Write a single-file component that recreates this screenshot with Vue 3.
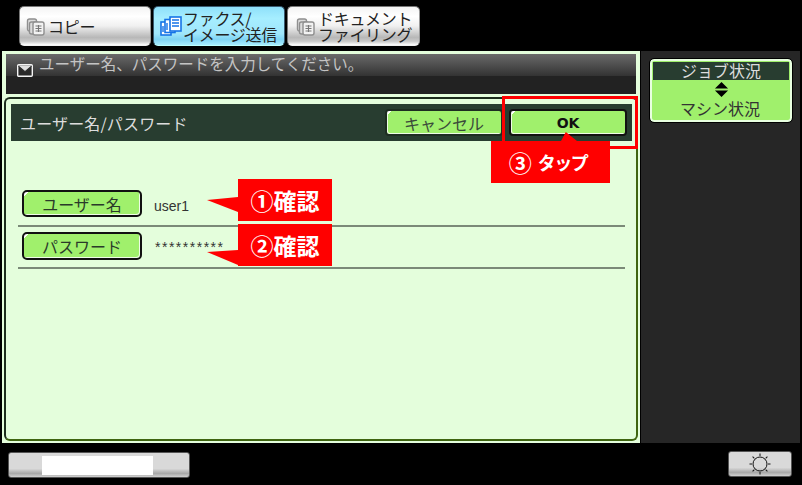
<script setup>
const tabs = [
  { id: 'copy', lines: ['コピー'], active: false },
  { id: 'fax', lines: ['ファクス/', 'イメージ送信'], active: true },
  { id: 'doc', lines: ['ドキュメント', 'ファイリング'], active: false },
]
const rows = [
  { label: 'ユーザー名', value: 'user1', cls: '' },
  { label: 'パスワード', value: '**********', cls: 'pw' },
]
const rays = [0, 45, 90, 135, 180, 225, 270, 315]
</script>

<template>
  <div class="screen">
    <div class="tabs">
      <div v-for="t in tabs" :key="t.id" class="tab" :class="[t.id, { active: t.active }]">
        <svg v-if="t.active" class="tab-icon" viewBox="0 0 22 20" width="22" height="20">
          <g fill="#fff" stroke="#1673e6" stroke-width="1.6">
            <rect x="1" y="6" width="10" height="13" />
            <rect x="5" y="3.5" width="10" height="13" />
            <rect x="10" y="1" width="11" height="14" />
          </g>
          <path d="M12 4h7M12 7h7M12 10h7" stroke="#1673e6" stroke-width="1.4" />
          <path d="M7 7v7M3 10v6" stroke="#1673e6" stroke-width="1.4" />
        </svg>
        <svg v-else class="tab-icon" viewBox="0 0 20 20" width="20" height="20">
          <g fill="#dcdcdc" stroke="#8f8f8f" stroke-width="1.4">
            <rect x="1.5" y="3" width="9" height="12" rx="2" />
            <rect x="3.5" y="6" width="9" height="12" rx="2" />
            <rect x="7" y="6" width="11" height="13" rx="2" fill="#f2f2f2" />
          </g>
          <path d="M9.5 10h6M9.5 12.5h6M9.5 15h6M12.5 9v7" stroke="#777" stroke-width="1.1" />
        </svg>
        <div class="tab-text">
          <span v-for="l in t.lines" :key="l">{{ l }}</span>
        </div>
      </div>
    </div>

    <div class="main">
      <div class="left">
        <div class="message">
          <svg class="mail" viewBox="0 0 16 13" width="16" height="13">
            <rect x="0.7" y="0.7" width="14.6" height="11.6" rx="1" fill="#2a2a2a" stroke="#f4f4f4" stroke-width="1.4" />
            <path d="M1.5 1.5h13L8 7z" fill="#e0e0e0" />
            <path d="M1.5 2.5L8 8l6.5-5.5" fill="none" stroke="#333" stroke-width="1" />
          </svg>
          <span class="message-text">ユーザー名、パスワードを入力してください。</span>
        </div>
        <div class="panel">
          <div class="panel-head">
            <span class="panel-title">ユーザー名/パスワード</span>
            <div class="head-btns">
              <div class="gbtn head cancel">キャンセル</div>
              <div class="gbtn head ok">OK</div>
            </div>
          </div>
          <div class="rows">
            <div v-for="r in rows" :key="r.label" class="row">
              <div class="gbtn field">{{ r.label }}</div>
              <span class="value" :class="r.cls">{{ r.value }}</span>
            </div>
          </div>
        </div>
      </div>

      <div class="side">
        <div class="job">
          <div class="job-top">ジョブ状況</div>
          <svg class="job-arrows" viewBox="0 0 16 16" width="15" height="15">
            <path d="M8 0l7 7H1zM1 9h14l-7 7z" fill="#000" />
          </svg>
          <div class="job-bottom">マシン状況</div>
        </div>
      </div>
    </div>

    <div class="bottom">
      <div class="sbtn wide"><div class="white"></div></div>
      <div class="sbtn sun">
        <svg viewBox="0 0 24 24" width="24" height="24">
          <circle cx="12" cy="12" r="7" fill="none" stroke="#111" stroke-width="1" />
          <path
            v-for="a in rays"
            :key="a"
            d="M12 1.5v2.5"
            stroke="#111"
            stroke-width="1"
            :transform="`rotate(${a} 12 12)`"
          />
        </svg>
      </div>
    </div>

    <div class="frame"></div>
    <div class="callout tap"><span class="tap-arrow"></span><span class="circ">③</span><span class="tap-word">タップ</span></div>
    <div class="callout c1"><span class="left-arrow"></span>①確認</div>
    <div class="callout c2"><span class="left-arrow low"></span>②確認</div>
  </div>
</template>

<style>
html, body { margin: 0; background: #000; }
</style>

<style scoped>
.screen {
  position: relative;
  width: 802px;
  height: 485px;
  background: #000;
  overflow: hidden;
  font-family: "Noto Sans CJK JP", "Liberation Sans", sans-serif;
}
.tabs {
  display: flex;
  gap: 2px;
  height: 51px;
  box-sizing: border-box;
  padding: 6px 0 0 19px;
}
.tab {
  width: 132px;
  height: 40px;
  box-sizing: border-box;
  display: flex;
  align-items: center;
  padding-left: 6px;
  gap: 1px;
  border-radius: 5px;
  border: 1px solid #777;
  border-bottom-color: #f0f0f0;
  border-right-color: #999;
  background: linear-gradient(#f4f4f4 0, #fff 25%, #f0f0f0 50%, #b8b8b8 80%, #c8c8c8 90%, #fff 100%);
  color: #222;
  font-size: 16px;
  line-height: 16px;
}
.tab.active {
  background: linear-gradient(#8fe0fa 0, #a6eeff 30%, #9fe6fb 70%, #7fd4f4 85%, #a8ecff 100%);
  border-color: #3a5a70;
  border-bottom-color: #bff;
}
.tab.doc { width: 133px; padding-left: 8px; gap: 2px; }
.tab.copy { gap: 2px; }
.tab-icon { flex: none; }
.tab-text { display: flex; flex-direction: column; letter-spacing: -0.3px; white-space: nowrap; }
.main {
  display: flex;
  height: 392px;
}
.left {
  width: 638px;
  margin-left: 2px;
  display: flex;
  flex-direction: column;
  background: #e4fedc;
  box-sizing: border-box;
}
.message {
  height: 40px;
  margin: 3px 4px 0 4px;
  box-sizing: border-box;
  display: flex;
  align-items: flex-start;
  background: linear-gradient(#6a6a6a 0, #333 22px, #222 22px, #222 100%);
  padding-left: 11px;
  color: #c4c4c4;
  font-size: 15.5px;
  line-height: 18px;
  gap: 6px;
  flex: none;
}
.mail { margin-top: 10px; flex: none; }
.panel {
  flex: 1;
  margin: 3px 2px 2px 2px;
  border: 2px solid #1c2c1c;
  border-right-color: #3f6510;
  border-bottom-color: #3f6510;
  border-radius: 6px;
  background: #e4fedc;
  box-sizing: border-box;
  padding: 5px 0 0 5px;
  display: flex;
  flex-direction: column;
}
.panel-head {
  height: 37px;
  width: 621px;
  background: #283d30;
  display: flex;
  align-items: center;
  justify-content: space-between;
  box-sizing: border-box;
  padding: 0 5px 0 9px;
  flex: none;
}
.panel-title { color: #ddd; font-size: 16px; white-space: nowrap; letter-spacing: 0.15px; }
.head-btns { display: flex; gap: 6px; }
.gbtn {
  box-sizing: border-box;
  display: flex;
  align-items: center;
  justify-content: center;
  background: linear-gradient(135deg, #fff 3px, #a0f06c 3px);
  border-radius: 4px;
  color: #2a3a2a;
  white-space: nowrap;
}
.gbtn.head {
  width: 118px;
  height: 27px;
  border: 2px solid #111;
  box-shadow: inset 1px -1px 0 #eefce6;
  font-size: 16px;
}
.gbtn.cancel { border-color: #1e2d22; color: #3a4a3a; }
.gbtn.ok { font-family: "DejaVu Sans", sans-serif; font-weight: 700; font-size: 14px; color: #111; }
.rows {
  padding: 44px 7px 0 7px;
  display: flex;
  flex-direction: column;
  width: 621px;
  box-sizing: border-box;
}
.row {
  height: 42px;
  box-sizing: border-box;
  border-bottom: 2px solid #7b8a78;
  display: flex;
  align-items: flex-start;
  padding: 5px 0 0 4px;
}
.gbtn.field {
  width: 120px;
  height: 28px;
  border: 2px solid #111;
  box-shadow: inset -1px -1px 0 #eefce6;
  font-size: 16px;
  border-radius: 5px;
  flex: none;
}
.row:first-child .gbtn.field { height: 27px; }
.value {
  margin: 7px 0 0 12px;
  font: 14px/18px "Liberation Sans", sans-serif;
  color: #333;
}
.value.pw { letter-spacing: 1.5px; margin: 6px 0 0 13px; }
.side {
  width: 159px;
  margin-left: 1px;
  background: #262626;
  box-sizing: border-box;
  padding: 8px 8px 0 9px;
}
.job {
  height: 63px;
  border: 2px solid #e8ffe0;
  outline: 1px solid #000;
  border-radius: 4px;
  box-sizing: border-box;
  background: #a0f06c;
  display: flex;
  flex-direction: column;
  align-items: center;
  color: #333;
  font-size: 16px;
  line-height: 17px;
  padding: 1px;
}
.job-top {
  align-self: stretch;
  height: 18px;
  background: #283d30;
  color: #ddd;
  text-align: center;
  flex: none;
}
.job-arrows { margin: 2px 0 0; flex: none; }
.job-bottom { margin-top: 3px; margin-left: -2px; }
.bottom {
  display: flex;
  justify-content: space-between;
  align-items: flex-start;
  padding: 8px 10px 0 8px;
}
.sbtn {
  height: 26px;
  box-sizing: border-box;
  border: 1px solid #555;
  border-radius: 3px;
  background: linear-gradient(#d9d9d9 0, #d9d9d9 65%, #a8a8a8 85%, #d0d0d0 100%);
  display: flex;
  align-items: center;
  justify-content: center;
}
.wide { width: 182px; margin-top: 1px; justify-content: flex-start; padding-left: 33px; }
.white { width: 111px; height: 19px; background: #fff; }
.sun { width: 64px; }
.frame {
  position: absolute;
  left: 502px;
  top: 96px;
  width: 136px;
  height: 53px;
  box-sizing: border-box;
  border: 3px solid #f00;
}
.callout {
  position: absolute;
  background: #f00;
  color: #fff;
  font-weight: 700;
  display: flex;
  align-items: center;
  justify-content: center;
  white-space: nowrap;
}
.tap { left: 491px; top: 141px; width: 119px; height: 42px; gap: 6px; padding-right: 5px; box-sizing: border-box; }
.circ { font-size: 23px; }
.tap-word { font-size: 18px; letter-spacing: -1.5px; }
.c1 { left: 238px; top: 179px; width: 94px; height: 42px; font-size: 23px; }
.c2 { left: 238px; top: 224px; width: 94px; height: 42px; font-size: 23px; }
.tap-arrow {
  position: absolute;
  left: 70px;
  top: -9px;
  width: 16px;
  height: 9px;
  background: #f00;
  clip-path: polygon(30% 0, 100% 100%, 0 100%);
}
.left-arrow {
  position: absolute;
  left: -31px;
  top: 18px;
  width: 31px;
  height: 15px;
  background: #f00;
  clip-path: polygon(0 20%, 100% 0, 100% 100%);
}
.left-arrow.low {
  top: 26px;
  clip-path: polygon(0 13%, 100% 0, 100% 100%);
}
</style>
